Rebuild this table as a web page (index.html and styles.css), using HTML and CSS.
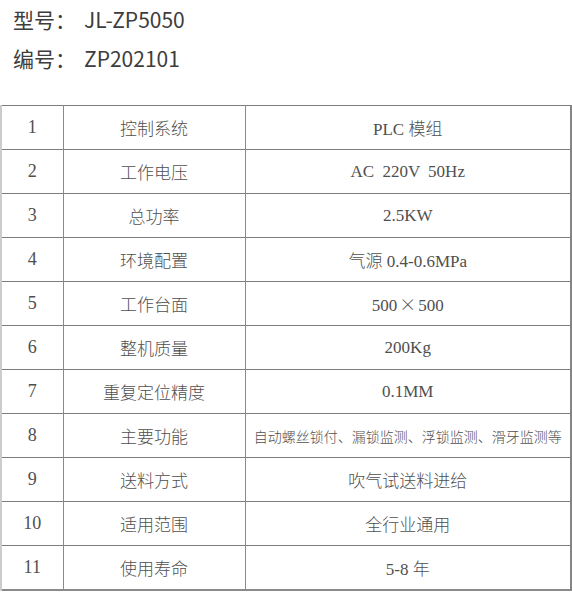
FILE: index.html
```html
<!DOCTYPE html>
<html lang="zh-CN">
<head>
<meta charset="utf-8">
<link rel="stylesheet" href="styles.css">
</head>
<body>
<div class="info">
  <p class="info-line"><span class="label">型号：</span>JL-ZP5050</p>
  <p class="info-line"><span class="label">编号：</span>ZP202101</p>
</div>
<table class="spec">
  <colgroup><col class="c1"><col class="c2"><col class="c3"></colgroup>
  <tbody>
    <tr><td class="num">1</td><td>控制系统</td><td>PLC 模组</td></tr>
    <tr><td class="num">2</td><td>工作电压</td><td class="wide">AC 220V 50Hz</td></tr>
    <tr><td class="num">3</td><td>总功率</td><td>2.5KW</td></tr>
    <tr><td class="num">4</td><td>环境配置</td><td>气源 0.4-0.6MPa</td></tr>
    <tr><td class="num">5</td><td>工作台面</td><td>500<span class="times">×</span>500</td></tr>
    <tr><td class="num">6</td><td>整机质量</td><td>200Kg</td></tr>
    <tr><td class="num">7</td><td>重复定位精度</td><td>0.1MM</td></tr>
    <tr><td class="num">8</td><td>主要功能</td><td class="small">自动螺丝锁付、漏锁监测、浮锁监测、滑牙监测等</td></tr>
    <tr><td class="num">9</td><td>送料方式</td><td>吹气试送料进给</td></tr>
    <tr><td class="num">10</td><td>适用范围</td><td>全行业通用</td></tr>
    <tr><td class="num">11</td><td>使用寿命</td><td>5-8 年</td></tr>
  </tbody>
</table>
</body>
</html>
```

FILE: styles.css
```css
html, body {
  margin: 0;
  padding: 0;
  background: #ffffff;
}

.info {
  padding-left: 13px;
  font-family: "Noto Sans CJK SC", "Noto Sans", sans-serif;
  font-size: 21px;
  font-weight: 400;
  color: #3d3d3d;
}

.info-line {
  margin: 0;
  line-height: 39px;
}

.label {
  margin-right: 8px;
}

.spec {
  margin-top: 27px;
  width: 572px;
  border-collapse: collapse;
  table-layout: fixed;
  font-family: "Liberation Serif", "Noto Sans CJK SC", serif;
  font-size: 17px;
  color: #505050;
  border-left: 2px solid #cccccc;
  border-right: 2px solid #858585;
  border-bottom: 2px solid #8a8a8a;
}

.c1 { width: 62px; }
.c2 { width: 182px; }
.c3 { width: auto; }

.spec td {
  height: 43px;
  padding: 0;
  text-align: center;
  vertical-align: middle;
  border-top: 1px solid #7d7d7d;
  border-right: 1px solid #8a8a8a;
  font-weight: 300;
}

.spec td:last-child {
  border-right: 2px solid #858585;
}

.spec td:first-child {
  border-left: 2px solid #cccccc;
}

.spec .num {
  font-size: 18px;
}

.spec .wide {
  word-spacing: 4px;
}

.spec .times {
  font-family: "Noto Sans CJK SC", sans-serif;
  font-size: 17px;
  padding: 0 2px;
}

.spec .small {
  font-size: 14px;
}
```
